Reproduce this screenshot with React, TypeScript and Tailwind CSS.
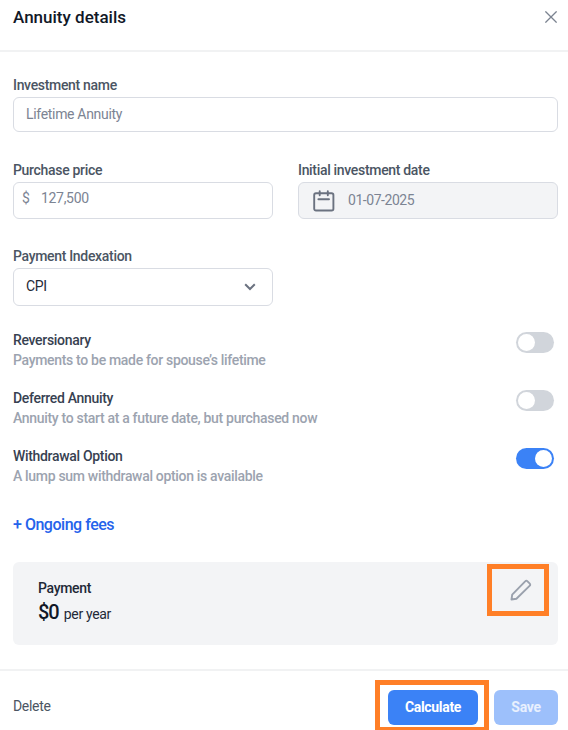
import React, { useState } from "react";

type Option = {
  id: string;
  title: string;
  description: string;
};

const options: Option[] = [
  {
    id: "reversionary",
    title: "Reversionary",
    description: "Payments to be made for spouse’s lifetime",
  },
  {
    id: "deferred",
    title: "Deferred Annuity",
    description: "Annuity to start at a future date, but purchased now",
  },
  {
    id: "withdrawal",
    title: "Withdrawal Option",
    description: "A lump sum withdrawal option is available",
  },
];

function Toggle({ on, label, onClick }: { on: boolean; label: string; onClick: () => void }) {
  return (
    <button
      role="switch"
      aria-checked={on}
      aria-label={label}
      onClick={onClick}
      className={`mt-[2px] flex h-[21px] w-[38px] items-center rounded-full px-[2px] ${
        on ? "justify-end bg-[#3b82f6]" : "justify-start bg-[#d1d5db]"
      }`}
    >
      <span className="size-[17px] rounded-full bg-white" />
    </button>
  );
}

export default function App() {
  const [enabled, setEnabled] = useState<Record<string, boolean>>({
    withdrawal: true,
  });

  const toggle = (id: string) =>
    setEnabled((prev) => ({ ...prev, [id]: !prev[id] }));

  return (
    <div className="h-[730px] w-[568px] overflow-hidden bg-white font-['Roboto',sans-serif] text-[14px] leading-[20px] tracking-[-0.32px] text-[#4b5563]">
      {/* Header */}
      <header className="flex h-[52px] items-start justify-between border-b-2 border-[#f1f2f3] pr-[11px] pl-[13px]">
        <h1 className="mt-[5px] text-[17px] leading-[24px] font-medium tracking-normal text-[#111827]">
          Annuity details
        </h1>
        <button aria-label="Close" className="mt-[11px]">
          <svg width="12" height="12" viewBox="0 0 12 12" fill="none" stroke="#7b8390" strokeWidth="1.3">
            <path d="M0.4 0.4 11.6 11.6M11.6 0.4 0.4 11.6" />
          </svg>
        </button>
      </header>

      {/* Form */}
      <main className="pr-[10px] pl-[13px]">
        <div className="pt-[23px]">
          <div className="mb-[2px] font-medium">Investment name</div>
          <div className="flex h-[35px] items-center rounded-md border border-[#d9dce3] px-[12px] pb-px text-[#7c8493]">
            Lifetime Annuity
          </div>
        </div>

        <div className="mt-[28px] grid grid-cols-[260px_260px] gap-[25px]">
          <div>
            <div className="mb-[2px] font-medium">Purchase price</div>
            <div className="flex h-[37px] items-center rounded-md border border-[#d9dce3] px-[8px] pb-[5px] text-[#7c8493]">
              <span className="w-[19px]">$</span>
              <span>127,500</span>
            </div>
          </div>
          <div>
            <div className="mb-[2px] font-medium">Initial investment date</div>
            <div className="flex h-[37px] items-center rounded-md border border-[#d9dce3] bg-[#f3f4f6] pl-[14px] text-[#7c8493]">
              <svg width="22" height="22" viewBox="0 0 22 22" fill="none" stroke="#6b7280" strokeWidth="1.9" strokeLinecap="round">
                <rect x="1.2" y="3.2" width="19.2" height="17.3" rx="1.8" />
                <path d="M6.7 1.2V5.2M14.8 1.2V5.2M5.4 9.2H16" />
              </svg>
              <span className="ml-[13px] pb-[2px] tracking-[-0.45px]">01-07-2025</span>
            </div>
          </div>
        </div>

        <div className="mt-[27px] w-[260px]">
          <div className="mb-[2px] font-medium">Payment Indexation</div>
          <div className="flex h-[38px] items-center justify-between rounded-md border border-[#d9dce3] pr-[16px] pb-[2px] pl-[12px] text-[#1f2937]">
            <span>CPI</span>
            <svg width="12" height="8" viewBox="0 0 12 8" fill="none" stroke="#6b7280" strokeWidth="2" className="mt-[2px]">
              <path d="M1.2 1.3 6 6 10.8 1.3" />
            </svg>
          </div>
        </div>

        <div className="mt-[24px] flex flex-col gap-[18px]">
          {options.map((o) => (
            <div key={o.id} className="flex items-start justify-between pr-[4px]">
              <div>
                <div className="font-medium text-[#374151]">{o.title}</div>
                <div className="font-medium text-[#9ca3af]">{o.description}</div>
              </div>
              <Toggle on={!!enabled[o.id]} label={o.title} onClick={() => toggle(o.id)} />
            </div>
          ))}
        </div>

        <button className="mt-[28px] block text-[16px] leading-[22px] font-medium tracking-[-0.48px] text-[#2563eb]">
          + Ongoing fees
        </button>

        {/* Payment summary */}
        <section className="mt-[26px] flex h-[83px] items-start justify-between rounded-md bg-[#f3f4f6] pt-[2px] pr-[9px] pl-[25px]">
          <div className="pt-[14px] text-[#1f2937]">
            <div className="font-medium">Payment</div>
            <div className="flex items-baseline gap-[5px] leading-[28px]">
              <span className="text-[20px] font-medium tracking-[-1px] text-[#111827]">$0</span>
              <span>per year</span>
            </div>
          </div>
          <button
            aria-label="Edit payment"
            className="flex h-[52px] w-[62px] items-center justify-center border-[5px] border-[#ff7f27] pl-[5px]"
          >
            <svg width="22" height="22" viewBox="0 0 22 22" fill="none" stroke="#9aa1ad" strokeWidth="1.9" strokeLinejoin="round">
              <path d="M1.5 20.5 2.2 15.6 15.4 2.2a1.3 1.3 0 0 1 1.9 0l2.5 2.5a1.3 1.3 0 0 1 0 1.9L6.4 19.8Z" />
            </svg>
          </button>
        </section>
      </main>

      {/* Footer */}
      <footer className="mt-[24px] flex h-[61px] items-start border-t-2 border-[#f1f2f3] pr-[10px] pl-[13px]">
        <button className="mt-[25px]">Delete</button>
        <div className="mt-[9px] ml-auto flex h-[52px] w-[114px] shrink-0 items-start border-[5px] border-[#ff7f27] pt-[5px] pl-[8px]">
          <button className="h-[35px] w-[90px] rounded-md bg-[#3b82f6] pb-[2px] font-bold text-white">
            Calculate
          </button>
        </div>
        <button className="mt-[19px] ml-[5px] h-[35px] w-[64px] rounded-md bg-[#9dc0fb] pb-[2px] font-bold text-[#e8f0fe]">
          Save
        </button>
      </footer>
    </div>
  );
}
